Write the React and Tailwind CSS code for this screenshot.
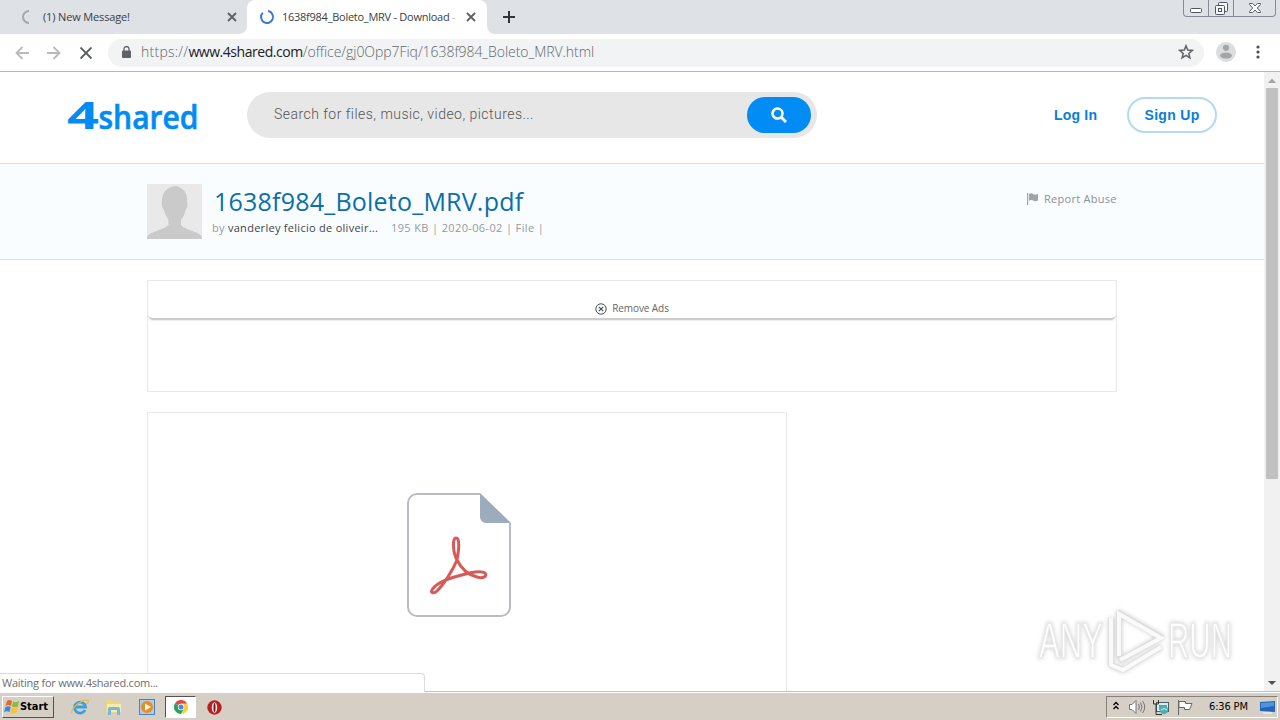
import React from "react";

const Spinner = ({ className, arc }) => (
  <svg className={className} width="16" height="16" viewBox="0 0 16 16" fill="none" stroke="currentColor" strokeWidth="2">
    <path d={arc} />
  </svg>
);

const Close = ({ className = "" }) => (
  <svg className={className} width="10" height="10" viewBox="0 0 10 10" stroke="#5f6368" strokeWidth="1.9">
    <path d="M1 1l8 8M9 1L1 9" />
  </svg>
);

function TabStrip() {
  return (
    <div className="flex h-[34px] shrink-0 items-start bg-[#dee1e6] text-[11px] text-[#3c4043]">
      <div className="flex h-[34px] w-[247px] items-center pl-[18px]">
        <Spinner className="shrink-0 text-[#a5a8ad]" arc="M11 2A6 6 0 0 0 11 14" />
        <span className="ml-[9px] w-[184px] whitespace-nowrap tracking-[-0.15px]">(1) New Message!</span>
        <Close />
      </div>
      <div className="relative flex h-[34px] w-[240px] items-center rounded-t-[8px] bg-white pl-[12px]">
        <Spinner className="shrink-0 text-[#3b78d8]" arc="M3.8 3.8A6 6 0 1 0 9 2.1" />
        <span className="ml-[7px] w-[184px] overflow-hidden whitespace-nowrap tracking-[-0.26px]">
          1638f984_Boleto_MRV - Download <span className="text-[#b5b8bc]">-</span>
        </span>
        <Close />
        <svg className="absolute -left-[8px] bottom-0" width="8" height="8"><path d="M8 0V8H0A8 8 0 0 0 8 0" fill="#fff" /></svg>
        <svg className="absolute -right-[8px] bottom-0" width="8" height="8"><path d="M0 0V8H8A8 8 0 0 1 0 0" fill="#fff" /></svg>
      </div>
      <svg className="ml-[16px] mt-[11px]" width="12" height="12" viewBox="0 0 12 12" stroke="#30343c" strokeWidth="2">
        <path d="M6 0V12M0 6H12" />
      </svg>
      <div className="ml-auto mr-[4px] flex h-[17px] w-[93px] rounded-b-[4px] border border-t-0 border-[#868a94]">
        <div className="flex w-[25px] justify-center border-r border-[#868a94] pt-[8px]">
          <svg width="12" height="5"><rect x=".5" y=".5" width="11" height="4" rx="1" fill="#fff" stroke="#50545e" /></svg>
        </div>
        <div className="flex w-[25px] justify-center border-r border-[#868a94] pt-[2px]">
          <svg width="13" height="13" fill="#f5f6f8" stroke="#50545e">
            <rect x="3.5" y=".5" width="9" height="9" rx="1" />
            <rect x=".5" y="3.5" width="9" height="9" rx="1" />
            <rect x="3.5" y="6.5" width="3" height="3" />
          </svg>
        </div>
        <div className="flex flex-1 justify-center pt-[3px]">
          <svg width="12" height="10" viewBox="0 0 12 10" fill="#fff" stroke="#50545e" strokeWidth=".9">
            <path d="M.5.5H3.7L6 3 8.3.5H11.5V1.5L8.3 5 11.5 8.5V9.5H8.3L6 7 3.7 9.5H.5V8.5L3.7 5 .5 1.5Z" />
          </svg>
        </div>
      </div>
    </div>
  );
}

function Toolbar() {
  return (
    <div className="flex h-[38px] shrink-0 items-center border-b border-[#b4b6b8] bg-white">
      <svg className="ml-[15px]" width="14" height="14" viewBox="0 0 14 14" fill="none" stroke="#b8babd" strokeWidth="1.8">
        <path d="M14 7H1.5M7.5 1L1.5 7l6 6" />
      </svg>
      <svg className="ml-[18px]" width="14" height="14" viewBox="0 0 14 14" fill="none" stroke="#b8babd" strokeWidth="1.8">
        <path d="M0 7H12.5M6.500 1L12.500 7l-6 6" />
      </svg>
      <svg className="ml-[19px]" width="12" height="12" viewBox="0 0 12 12" stroke="#55595e" strokeWidth="1.9">
        <path d="M.5.5l11 11M11.500.5L.5 11.500" />
      </svg>
      <div className="ml-[16px] flex h-[28px] w-[1096px] items-center rounded-full bg-[#f1f3f4] pl-[14px] pr-[10px]">
        <svg className="-mt-[2px]" width="9" height="12" viewBox="0 0 9 12">
          <rect y="4.500" width="9" height="7.500" rx="1" fill="#5f6368" />
          <path d="M2 5V3A2.500 2.500 0 0 1 7 3V5" fill="none" stroke="#5f6368" strokeWidth="1.300" />
        </svg>
        <span className="-mt-[2px] ml-[10px] whitespace-nowrap text-[14px] font-light tracking-[-0.05px] text-[#63676c]">
          <span className="tracking-[0.25px]">https://</span>
          <span className="font-normal tracking-[-0.45px] text-[#202124]">www.4shared.com</span>/office/gj0Opp7Fiq/1638f984_Boleto_MRV.html
        </span>
        <svg className="-mt-[1px] ml-auto" width="16" height="16" viewBox="0 0 16 16" fill="none" stroke="#5f6368" strokeWidth="1.500">
          <path d="M8 1.800L9.700 6.100L14.300 6.400L10.800 9.400L11.900 13.900L8 11.400L4.100 13.900L5.200 9.400L1.700 6.400L6.300 6.100Z" />
        </svg>
      </div>
      <svg className="-mt-[2px] ml-[12px]" width="20" height="20" viewBox="0 0 20 20">
        <circle cx="10" cy="10" r="10" fill="#dcdddf" />
        <circle cx="10" cy="5.800" r="3.100" fill="#a4a6a9" />
        <ellipse cx="10" cy="13.600" rx="6" ry="3" fill="#a4a6a9" />
      </svg>
      <svg className="-mt-[1px] ml-[20px]" width="4" height="14" fill="#4d5156">
        <circle cx="2" cy="2" r="1.600" /><circle cx="2" cy="7" r="1.600" /><circle cx="2" cy="12" r="1.600" />
      </svg>
    </div>
  );
}

function Header() {
  return (
    <header className="flex h-[92px] shrink-0 items-start border-b border-[#d3dfe6] bg-white">
      <svg className="ml-[66px] mt-[14px] shrink-0" width="140" height="60" fill="#008cf4" fontFamily="'Open Sans'" fontWeight="700">
        <text x="1" y="43" fontSize="37" textLength="32" lengthAdjust="spacingAndGlyphs">4</text>
        <text x="32.500" y="43" fontSize="32.500" fontWeight="600" stroke="#008cf4" strokeWidth=".6" textLength="100" lengthAdjust="spacingAndGlyphs">shared</text>
      </svg>
      <div className="ml-[41px] mt-[20px] flex h-[46px] w-[570px] items-center justify-between rounded-full bg-[#e7e7e7] pl-[27px] pr-[6px]">
        <span className="-mt-[2px] font-[Roboto] text-[14px] font-light tracking-[0.47px] text-[#555]">Search for files, music, video, pictures...</span>
        <div className="flex h-[36px] w-[64px] items-center justify-center rounded-full bg-[#008cf4]">
          <svg width="16" height="16" viewBox="0 0 16 16" fill="none" stroke="#fff">
            <circle cx="6.500" cy="6.500" r="5" strokeWidth="2.600" />
            <path d="M10.300 10.300L15 15" strokeWidth="3" />
          </svg>
        </div>
      </div>
      <span className="ml-[237px] mt-[34px] w-[43px] whitespace-nowrap font-['Liberation_Sans'] text-[14px] font-bold leading-[18px] tracking-[0.2px] text-[#087ed8]">Log In</span>
      <div className="ml-[30px] mt-[25px] flex h-[36px] w-[90px] items-center justify-center whitespace-nowrap rounded-full border-2 border-[#b3d9f3] font-['Liberation_Sans'] text-[14px] font-bold tracking-[0.3px] text-[#087ed8]">Sign Up</div>
    </header>
  );
}

function FileBand() {
  return (
    <section className="flex h-[96px] shrink-0 items-start border-b border-[#d9e1e4] bg-[#f9fdff] pl-[147px] pt-[20px]">
      <svg width="55" height="55" viewBox="0 0 55 55">
        <rect width="55" height="55" fill="#e9e9e9" />
        <path d="M28 2C20 3 14.500 9 15 18C14 19 15 24 17 26C18 31 20 33 21.500 36V41C17 46 3 47 0 53V55H55V53C52 47 38 46 34 41V36C36 33 38 30 38.500 26C41 24 41 19 40 18C41 9 36 3 28 2" fill="#cacaca" />
      </svg>
      <div className="ml-[10px]">
        <h1 className="h-[35px] whitespace-nowrap pl-[2px] text-[25px] leading-[34px] tracking-[0.22px] text-[#0b6fa8]">1638f984_Boleto_MRV.pdf</h1>
        <p className="flex whitespace-nowrap text-[11px] leading-[18px] text-[#969a9d]">
          <span className="w-[179px] tracking-[0.28px]">by <span className="text-[#3f4447]">vanderley felicio de oliveir...</span></span>
          <span className="tracking-[0.37px]">195 KB | 2020-06-02 | File |</span>
        </p>
      </div>
      <div className="ml-auto mr-[147px] flex items-center pt-[6px]">
        <svg width="11" height="12" viewBox="0 0 11 12" fill="#a0a4a3">
          <path d="M0 0H1.200V12H0ZM2 1C4-.3 5 .6 6.500 1.300C8 2 9 1.500 11 1V7.500C8.500 8.800 7.500 8.300 6 7.500C4.500 6.900 3.500 7 2 7.700Z" />
        </svg>
        <span className="ml-[6px] w-[73px] whitespace-nowrap text-[11px] leading-[18px] tracking-[0.28px] text-[#8d9193]">Report Abuse</span>
      </div>
    </section>
  );
}

function PdfIcon() {
  return (
    <svg width="106" height="126" viewBox="0 0 106 126" fill="none">
      <path d="M74 2H11A9 9 0 0 0 2 11V115A9 9 0 0 0 11 124H95A9 9 0 0 0 104 115V31" stroke="#b9bcc3" strokeWidth="2" />
      <path d="M74 1L105 31H80A6 6 0 0 1 74 25Z" fill="#9cacbc" />
      <g stroke="#d85a57" strokeWidth="3" strokeLinejoin="round">
        <path d="M51 68C47 61 46 46 50 46C54 46 53 57 51 68C47 78 38 92 31 99C28 102 24 101 26 98C29 92 41 87 52 84C62 81 75 78 79 81C82 84 77 87 71 85C62 83 55 76 51 68Z" />
      </g>
    </svg>
  );
}

function Content() {
  return (
    <main className="min-h-0 flex-1 overflow-hidden bg-white pl-[147px] pt-[20px]">
      <div className="h-[112px] w-[970px] border border-[#e8e8e8]">
        <div className="flex h-[39px] items-end justify-center rounded-b-[5px] border-b-2 border-[#cdcdcd] pb-[1px] shadow-[0_1px_1px_#eee]">
          <svg className="mb-[2px]" width="12" height="12" viewBox="0 0 12 12" fill="none" stroke="#46505a">
            <circle cx="6" cy="6" r="5.200" /><path d="M3.800 3.800l4.400 4.400M8.200 3.800L3.800 8.200" strokeWidth="1.200" />
          </svg>
          <span className="mb-[1px] ml-[5px] whitespace-nowrap text-[10px] leading-[16px] tracking-[-0.08px] text-[#666]">Remove Ads</span>
        </div>
      </div>
      <div className="mt-[20px] h-[320px] w-[640px] border border-[#e8e8e8] pl-[258px] pt-[79px]">
        <PdfIcon />
      </div>
    </main>
  );
}

function Watermark() {
  return (
    <svg className="absolute left-[1030px] top-[604px] drop-shadow-[0_0_2px_rgba(0,0,0,0.2)]" width="216" height="80" fontFamily="'Liberation Sans Narrow','Liberation Sans'" fontSize="50" fill="#fff">
      <g stroke="#e9e9e9" strokeWidth="1.500">
        <text x="9" y="54" textLength="64" lengthAdjust="spacingAndGlyphs">ANY</text>
        <text x="138" y="54" textLength="64" lengthAdjust="spacingAndGlyphs">RUN</text>
      </g>
      <g fill="none" stroke="#dedede" strokeWidth="5.500" strokeLinejoin="round">
        <path d="M89 54V9L131 33L89 57M81 14V61L93 66L131 43" />
      </g>
      <g fill="none" stroke="#fafafa" strokeWidth="4">
        <path d="M89 52V10L131 34L90 56M81 14V61L93 66L131 43" />
      </g>
    </svg>
  );
}

function Scrollbar() {
  return (
    <div className="flex w-[16px] shrink-0 flex-col items-center bg-[#f1f1f1]">
      <svg width="16" height="16"><path d="M4 11L8 6.500L12 11Z" fill="#a3a3a3" /></svg>
      <div className="h-[391px] w-[12px] bg-[#c1c1c1]" />
      <svg className="mt-auto" width="16" height="16"><path d="M4 5L8 9L12 5Z" fill="#505050" /></svg>
    </div>
  );
}

function Taskbar() {
  return (
    <div className="flex h-[28px] shrink-0 items-start border-t border-white bg-[#d6cfc6] pt-[3px] shadow-[0_-1px_0_#c4c0b8]">
      <div className="ml-[2px] flex h-[22px] w-[52px] items-center border border-b-[#55514d] border-l-white border-r-[#55514d] border-t-white">
        <svg className="ml-[1px]" width="16" height="16" viewBox="0 0 16 16">
          <path d="M3 2Q5 0 8 2L7 7Q4 5 1.500 7Z" fill="#e8662f" />
          <path d="M9 2.500Q12 4 15 2L14 7.500Q11 9 8 7.500Z" fill="#8bbb3f" />
          <path d="M1.500 8Q4 6.500 6.800 8L5.500 13Q3 11.500 0 13Z" fill="#3a8bd0" />
          <path d="M8 8.500Q11 10 14 8.300L12.500 13.500Q9 15.500 6.500 13.500Z" fill="#f7c33a" />
        </svg>
        <span className="font-['DejaVu_Sans_Condensed','DejaVu_Sans'] text-[11px] font-bold tracking-[-0.05px] text-black">Start</span>
      </div>
      <svg className="ml-[17px] mt-[3px]" width="18" height="16" viewBox="0 0 18 16" fill="none">
        <path d="M14 11A5.500 5.500 0 1 1 14.500 8H5" stroke="#3a9ee0" strokeWidth="2.800" />
        <path d="M1 14C-1 10 12-1 17 1.500C18 2.500 17 4 16 5" stroke="#e9b93e" strokeWidth="1.300" />
      </svg>
      <svg className="ml-[16px] mt-[4px]" width="17" height="16" viewBox="0 0 17 16">
        <path d="M1 2L2 0H7L8 2H15V13H1Z" fill="#efd678" />
        <path d="M2 4H16V12H2Z" fill="#f7ecaf" />
        <path d="M3 15V9Q3 7 5 7H13Q15 7 15 9V15H12V10H6V15Z" fill="#75b8df" />
      </svg>
      <svg className="ml-[17px] mt-[3px]" width="17" height="17" viewBox="0 0 17 17">
        <rect x=".5" y=".5" width="15" height="15" fill="#a9cdec" stroke="#4a83b8" />
        <circle cx="8" cy="8" r="6" fill="#f18a1d" />
        <path d="M6 4.500L12 8L6 11.500Z" fill="#fff" />
      </svg>
      <div className="ml-[9px] flex h-[22px] w-[31px] items-center justify-center border border-b-white border-l-[#55514d] border-r-white border-t-[#55514d] bg-white">
        <svg width="14" height="14" viewBox="0 0 14 14">
          <path d="M7 7L.9 3.500A7 7 0 0 1 13.100 3.500Z" fill="#dd4b3e" />
          <path d="M7 7L.9 3.500A7 7 0 0 0 7 14L10 8.700Z" fill="#29a35a" />
          <path d="M7 3.500H13.100A7 7 0 0 1 7 14L10 8.700Z" fill="#f9cd3e" />
          <circle cx="7" cy="7" r="3.200" fill="#fff" /><circle cx="7" cy="7" r="2.500" fill="#4c86ea" />
        </svg>
      </div>
      <svg className="ml-[11px] mt-[4px]" width="15" height="15" viewBox="0 0 15 15">
        <circle cx="7.500" cy="7.500" r="7.200" fill="#b7201f" />
        <ellipse cx="7.500" cy="7.500" rx="2.700" ry="5.300" fill="#f3eaea" /><ellipse cx="7.500" cy="7.500" rx="1" ry="4.500" fill="#7c1010" />
      </svg>
      <div className="ml-auto mr-[2px] flex h-[22px] w-[172px] items-center border border-b-white border-l-[#85807a] border-r-white border-t-[#85807a] font-['DejaVu_Sans_Condensed','DejaVu_Sans'] text-[11px] text-black">
        <svg className="-mt-[4px] ml-[6px]" width="6" height="9" fill="none" stroke="#000" strokeWidth="1.300"><path d="M.5 4L3 1.500L5.500 4M.5 8L3 5.500L5.500 8" /></svg>
        <svg className="ml-[10px]" width="17" height="14" fill="none" stroke="#777">
          <path d="M.5 4.500H3L7 .5V13.500L3 9.500H.5Z" fill="#fff" />
          <path d="M9.500 4Q11.500 7 9.500 10M11.500 2.500Q14.500 7 11.500 11.500M13.500 1Q18 7 13.500 13" />
        </svg>
        <svg className="ml-[7px]" width="17" height="15">
          <rect x="3.500" y="2.500" width="12" height="9" fill="#d8edf1" stroke="#4d6165" />
          <rect x="6" y="5" width="8" height="5" fill="#4aa9b7" />
          <path d="M.5 0V4H5.500V0M3 4V14.500H9" fill="none" stroke="#333" /><circle cx="11" cy="10" r="4" fill="#50aeb1" /><path d="M8 10Q11 7 14 10" fill="none" stroke="#d5f0e8" />
        </svg>
        <svg className="ml-[7px]" width="16" height="15" fill="#fff" stroke="#686868"><path d="M1.500 0V15M2 1.500H8.500V3.500H15L12.500 9.500H7.500V7.500H2Z" /></svg>
        <span className="ml-[16px] whitespace-nowrap tracking-[-0.15px]">6:36 PM</span>
        <svg className="ml-auto mr-[1px]" width="16" height="15"><path d="M0 2L15 1V12L0 11Z" fill="#2466b5" /><path d="M1 3L14 2V6L1 8Z" fill="#5094dd" /><path d="M3 13H12" stroke="#e9edf2" strokeWidth="1.500" /></svg>
      </div>
    </div>
  );
}

export default function App() {
  return (
    <div className="relative flex h-[720px] w-[1280px] flex-col overflow-hidden bg-white font-['Open_Sans','Noto_Sans',sans-serif]">
      <TabStrip />
      <Toolbar />
      <div className="flex min-h-0 flex-1">
        <div className="flex min-w-0 flex-1 flex-col">
          <Header />
          <FileBand />
          <Content />
        </div>
        <Scrollbar />
      </div>
      <Taskbar />
      <div className="absolute bottom-[28px] left-0 flex h-[19px] w-[425px] items-center rounded-tr-[4px] border border-b-0 border-l-0 border-[#dcdcdc] bg-white pl-[2px] text-[11px] tracking-[-0.23px] text-[#6b6e72]">Waiting for www.4shared.com...</div>
      <Watermark />
    </div>
  );
}
